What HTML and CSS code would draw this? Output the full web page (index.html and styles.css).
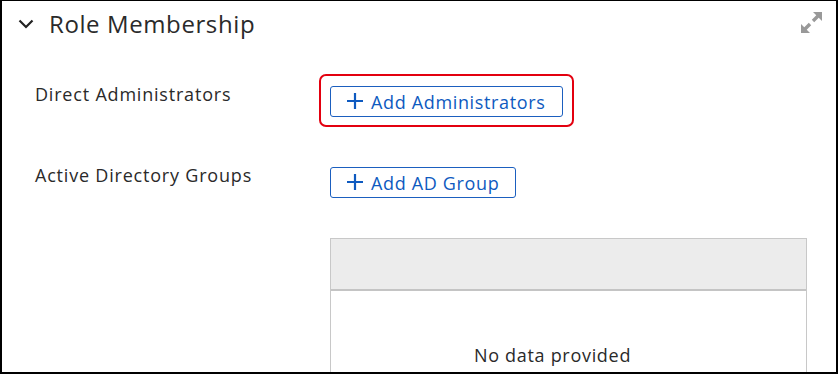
FILE: index.html
```html
<!DOCTYPE html>
<html lang="en">
<head>
    <meta charset="UTF-8">
    <title>Role Membership</title>
    <link rel="stylesheet" href="styles.css">
</head>
<body>
    <div class="panel">
        <div class="panel-header">
            <svg class="chevron" width="16" height="10" viewBox="0 0 16 10">
                <path d="M1.5 1.5 L8 8 L14.5 1.5" fill="none" stroke="#222" stroke-width="2.2"/>
            </svg>
            <span class="panel-title">Role Membership</span>
            <svg class="expand" width="21" height="21" viewBox="0 0 21 21">
                <path d="M12 0 H21 V9 Z" fill="#999"/>
                <path d="M0 12 V21 H9 Z" fill="#999"/>
                <path d="M17 4 L12 9 M4 17 L9 12" stroke="#999" stroke-width="3.4"/>
            </svg>
        </div>

        <div class="form-row first">
            <div class="label">Direct Administrators</div>
            <div class="field">
                <div class="highlight">
                    <button class="add-btn">
                        <svg class="plus" width="16" height="16" viewBox="0 0 16 16">
                            <path d="M8 0 V16 M0 8 H16" stroke="currentColor" stroke-width="2.2"/>
                        </svg>Add Administrators
                    </button>
                </div>
            </div>
        </div>

        <div class="form-row second">
            <div class="label">Active Directory Groups</div>
            <div class="field">
                <button class="add-btn">
                    <svg class="plus" width="16" height="16" viewBox="0 0 16 16">
                        <path d="M8 0 V16 M0 8 H16" stroke="currentColor" stroke-width="2.2"/>
                    </svg>Add AD Group
                </button>
                <div class="grid">
                    <div class="grid-head"></div>
                    <div class="grid-body">No data provided</div>
                </div>
            </div>
        </div>
    </div>
</body>
</html>
```

FILE: styles.css
```css
html, body {
    margin: 0;
    padding: 0;
}
body {
    font-family: "Open Sans", sans-serif;
    color: #222;
    background: #fff;
}
.panel {
    box-sizing: border-box;
    width: 838px;
    height: 374px;
    border: 2px solid #000;
    border-top-width: 1px;
    overflow: hidden;
}
.panel-header {
    display: flex;
    align-items: center;
    height: 44px;
    padding: 0 14px 0 16px;
}
.chevron {
    margin-right: 15px;
    margin-top: 1px;
}
.panel-title {
    flex: 1;
    font-size: 24px;
    letter-spacing: 0.6px;
    color: #2a2a2a;
}
.expand {
    margin-top: -1px;
}
.form-row {
    display: flex;
    padding-left: 33px;
}
.form-row.first {
    margin-top: 41px;
}
.form-row.second {
    margin-top: 40px;
}
.label {
    width: 295px;
    font-size: 18px;
    letter-spacing: 0.8px;
    color: #2a2a2a;
    line-height: 20px;
    margin-top: -2px;
}
.field {
    display: flex;
    flex-direction: column;
    align-items: flex-start;
}
.highlight {
    margin: -12px 0 0 -11px;
    padding: 10px 9px 8px 9px;
    border: 2px solid #e3000f;
    border-radius: 7px;
}
.add-btn {
    box-sizing: border-box;
    height: 31px;
    padding: 0 16px 0 16px;
    background: #fff;
    border: 1px solid #1b5fbf;
    border-radius: 3px;
    color: #0e5ac0;
    font-family: inherit;
    font-size: 18px;
    letter-spacing: 0.65px;
    display: flex;
    align-items: center;
    cursor: pointer;
}
.plus {
    margin-right: 8px;
    margin-top: -1px;
}
.grid {
    width: 475px;
    margin-top: 40px;
    border: 1px solid #c8c8c8;
}
.grid-head {
    height: 50px;
    background: #ececec;
    border-bottom: 2px solid #c4c4c4;
}
.grid-body {
    height: 120px;
    text-align: center;
    padding: 52px 32px 0 0;
    box-sizing: border-box;
    font-size: 18px;
    letter-spacing: 0.7px;
    color: #2a2a2a;
}
```
